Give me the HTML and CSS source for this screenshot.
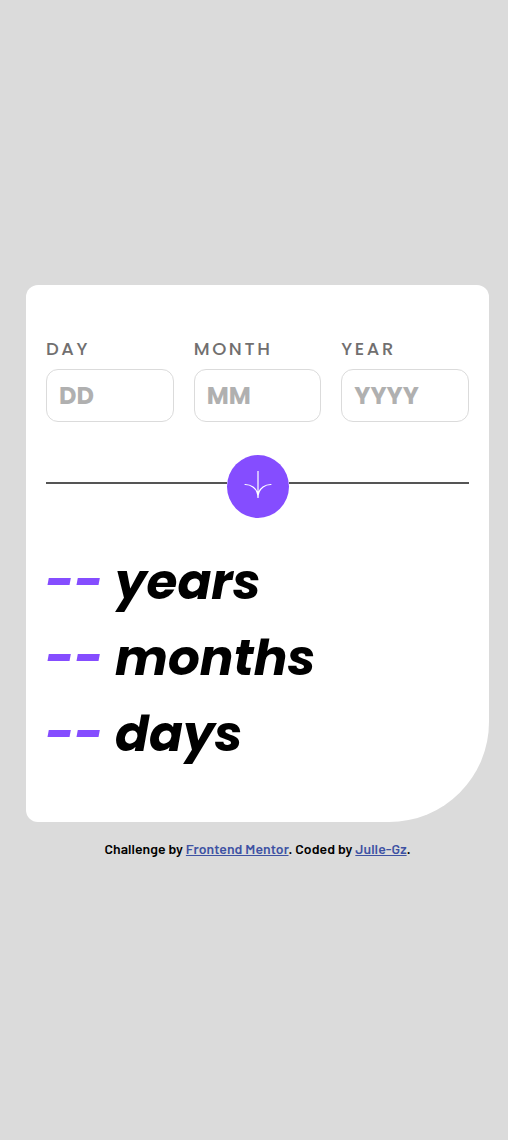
FILE: index.html
```html
<!DOCTYPE html>
<html lang="en">
<head>
<meta charset="utf-8">
<meta name="viewport" content="width=device-width, initial-scale=1">
<title>Age calculator</title>
<link rel="stylesheet" href="styles.css">
</head>
<body>
<main class="card">
  <form class="fields">
    <label class="field"><span class="label">DAY</span><input class="input" type="text" placeholder="DD"></label>
    <label class="field"><span class="label">MONTH</span><input class="input" type="text" placeholder="MM"></label>
    <label class="field"><span class="label">YEAR</span><input class="input" type="text" placeholder="YYYY"></label>
  </form>
  <div class="divider">
    <span class="line"></span>
    <button class="submit" type="button" aria-label="Calculate">
      <svg class="arrow" viewBox="0 0 46 44" fill="none" stroke="#fff" stroke-width="2"><path d="M1 22.019C8.333 21.686 23 25.616 23 44M23 44V0M45 22.019C37.667 21.686 23 25.616 23 44"/></svg>
    </button>
    <span class="line"></span>
  </div>
  <section class="results">
    <p class="result"><span class="value">--</span><span class="unit">years</span></p>
    <p class="result"><span class="value">--</span><span class="unit">months</span></p>
    <p class="result"><span class="value">--</span><span class="unit">days</span></p>
  </section>
</main>
<footer class="attribution">Challenge by <a href="#">Frontend Mentor</a>. Coded by <a href="#">Julie-Gz</a>.</footer>
</body>
</html>
```
FILE: styles.css
```css
* { box-sizing: border-box; }
body {
  margin: 0;
  min-height: 1140px;
  padding: 285px 19px 0 26px;
  background: #dbdbdb;
  font-family: Poppins, Inter, sans-serif;
}
.card {
  height: 537px;
  padding: 54px 20px 0;
  background: #fff;
  border-radius: 12px 12px 100px 12px;
}
.fields { display: grid; grid-template-columns: repeat(3, 1fr); gap: 20px; }
.field { display: flex; flex-direction: column; min-width: 0; }
.label {
  height: 30px;
  line-height: 20px;
  font-size: 18px;
  font-weight: 500;
  letter-spacing: 2.6px;
  color: #716f6f;
}
.input {
  width: 100%;
  height: 53px;
  padding: 0 12px;
  border: 1px solid #dbdbdb;
  border-radius: 12px;
  background: #fff;
  font: 700 24px Poppins, Inter, sans-serif;
}
.input::placeholder { color: #b0b0b0; opacity: 1; }
.divider { display: flex; margin-top: 33px; height: 63px; }
.line { flex: 1; height: 2px; margin-top: 27px; background: #555; }
.submit {
  display: flex;
  align-items: center;
  justify-content: center;
  width: 62px;
  height: 63px;
  padding: 0;
  border: 0;
  border-radius: 50%;
  background: #854dff;
}
.arrow { width: 28px; height: 27px; margin-top: -4px; }
.results { padding-top: 26px; }
.result {
  display: flex;
  height: 76px;
  margin: 0;
  line-height: 76px;
  font-size: 50px;
  font-weight: 700;
  font-style: italic;
}
.value { width: 70px; margin-left: -1px; color: #854dff; white-space: nowrap; }
.attribution {
  padding-top: 17px;
  text-align: center;
  font: 600 14px/20px Bahnschrift, "DIN Alternate", "D-DIN", Barlow, Roboto, sans-serif;
  letter-spacing: 0.06px;
  color: #000;
}
.attribution a { color: #3e52a3; }
```
